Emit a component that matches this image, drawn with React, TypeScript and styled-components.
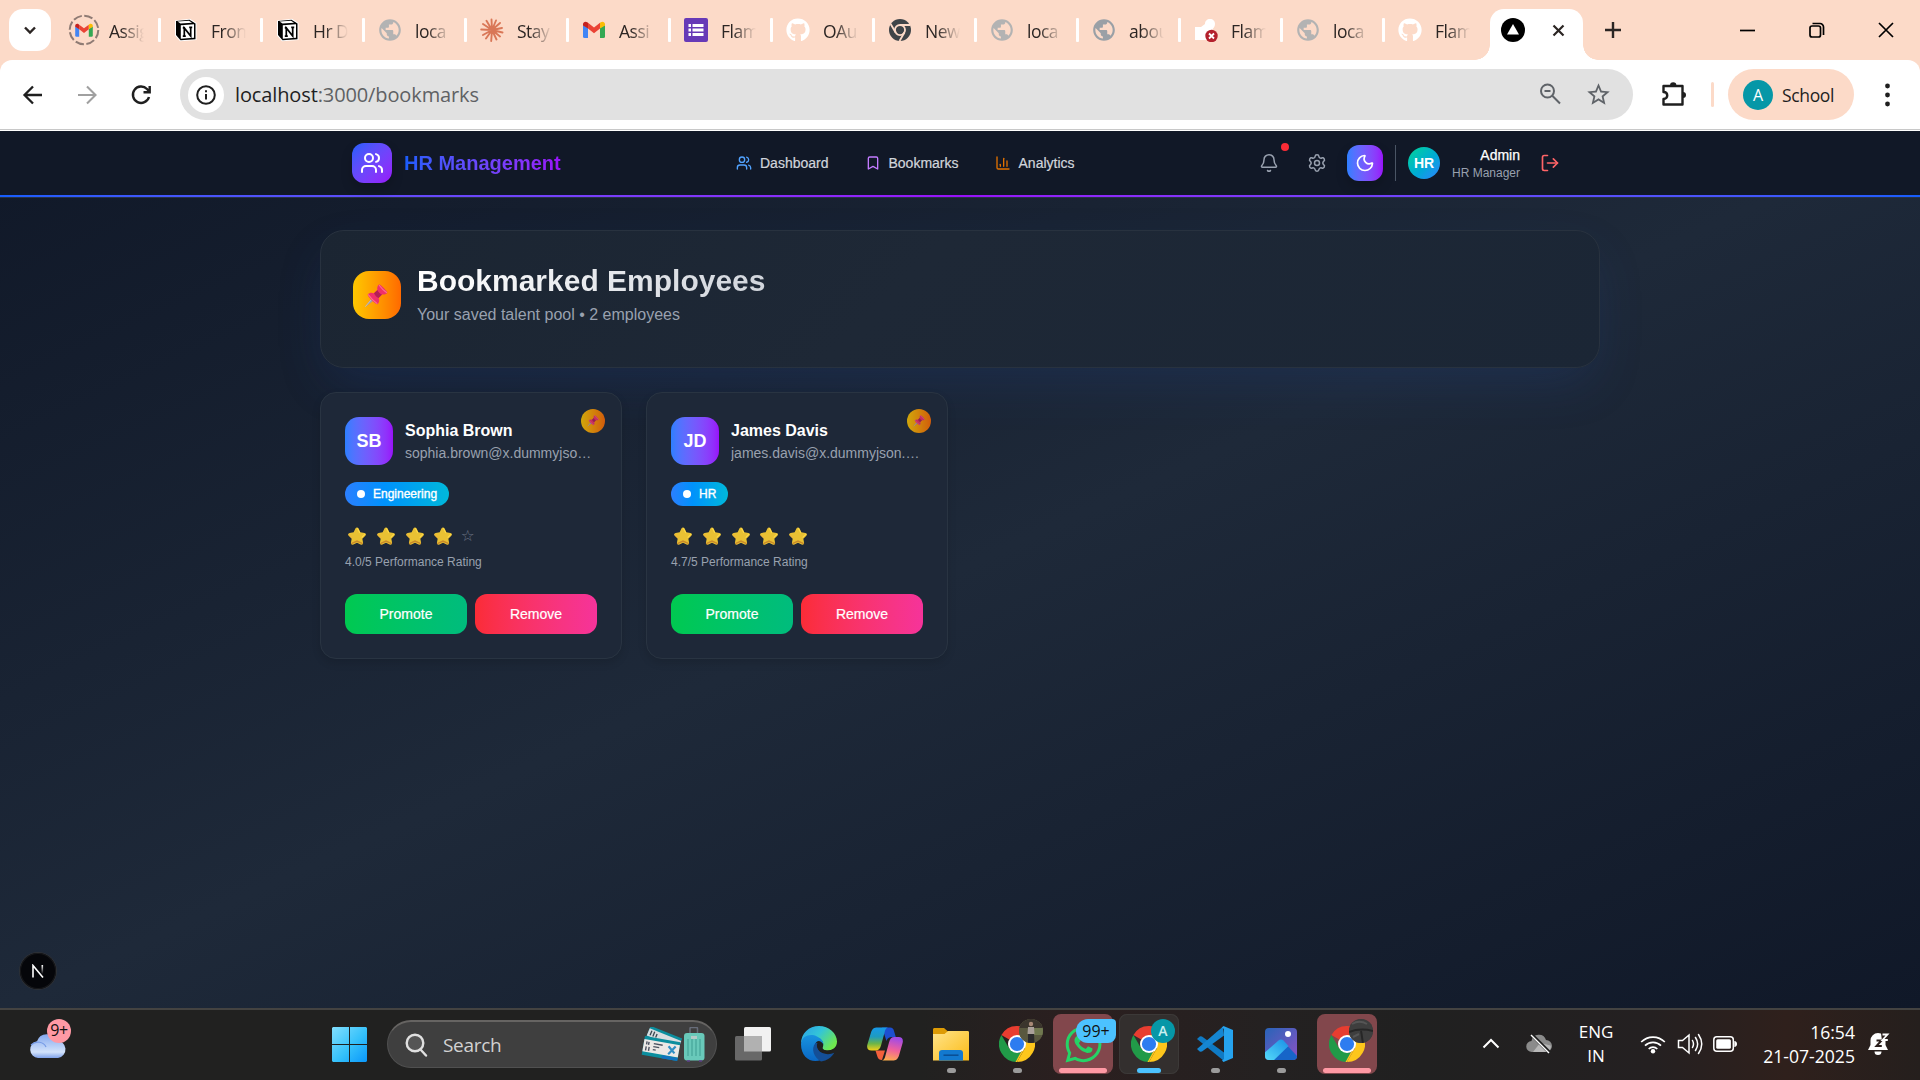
import React from "react";
import styled, { createGlobalStyle, css } from "styled-components";
import { Users, Bookmark, ChartColumn, Bell, Settings, Moon, LogOut } from "lucide-react";
import { FaGithub, FaWhatsapp } from "react-icons/fa";
import { MdPublic, MdStarOutline } from "react-icons/md";

const uiFont = '"Open Sans", "Noto Sans", sans-serif';
const pageFont = '"Liberation Sans", Arial, sans-serif';

const GlobalStyle = createGlobalStyle`
  *, *::before, *::after { box-sizing: border-box; }
  body { margin: 0; overflow: hidden; background: #101828; }
  svg { display: block; flex: none; }
  button { border: 0; padding: 0; margin: 0; font: inherit; color: inherit; background: none; }
  h1, h3, p { margin: 0; font-weight: inherit; font-size: inherit; }
`;

const Screen = styled.div`
  width: 1920px;
  height: 1080px;
  display: flex;
  flex-direction: column;
  overflow: hidden;
`;

/* ---------- Browser chrome ---------- */

const TabStrip = styled.div`
  height: 60px;
  flex: none;
  display: flex;
  align-items: center;
  background: #fcdac8;
  font: 17.5px ${uiFont};
  color: #2b2523;
`;

const TabSearch = styled.button`
  width: 42px;
  height: 42px;
  margin: 0 8px 0 9px;
  border-radius: 14px;
  background: #fff;
  display: grid;
  place-items: center;
`;

const Tab = styled.div`
  width: 102px;
  height: 24px;
  padding-left: 13px;
  display: flex;
  align-items: center;
  flex: none;
`;

const Favicon = styled.span`
  width: 24px;
  height: 24px;
  display: flex;
  align-items: center;
  justify-content: center;
  flex: none;
`;

const TabTitle = styled.span`
  width: 46px;
  margin-left: 13px;
  padding-top: 2px;
  line-height: 28px;
  letter-spacing: -0.5px;
  white-space: nowrap;
  mask-image: linear-gradient(90deg, #000 12px, transparent 35px);
`;

const TabDivider = styled.span`
  width: 3px;
  height: 24px;
  margin-left: auto;
  border-radius: 1px;
  background: #fff;
`;

const ActiveTab = styled.div`
  position: relative;
  width: 93px;
  height: 51px;
  margin: 9px 0 0 3px;
  padding: 0 18px 9px 11px;
  border-radius: 14px 14px 0 0;
  background: #fff;
  display: flex;
  align-items: center;
  justify-content: space-between;
  &::before, &::after {
    content: "";
    position: absolute;
    bottom: 0;
    width: 15px;
    height: 15px;
  }
  &::before { left: -15px; background: radial-gradient(circle at 0 0, transparent 14.5px, #fff 15px); }
  &::after { right: -15px; background: radial-gradient(circle at 100% 0, transparent 14.5px, #fff 15px); }
`;

const NewTab = styled.button`
  margin-left: 21px;
`;

const WindowControls = styled.div`
  margin-left: auto;
  display: flex;
  align-items: center;
  height: 60px;
`;

const WindowButton = styled.button`
  width: 69px;
  display: grid;
  place-items: center;
`;

const ToolbarBack = styled.div`
  flex: none;
  background: #fcdac8;
`;

const Toolbar = styled.div`
  height: 71px;
  padding: 9px 0 0 21px;
  display: flex;
  align-items: flex-start;
  background: #fff;
  border-radius: 12px 12px 0 0;
  box-shadow: inset 0 -1px #fff, inset 0 -2px #c8c8c8;
  color: #1f1f1f;
  font: 17px ${uiFont};
`;

const NavButton = styled.button`
  width: 24px;
  height: 51px;
  margin-right: 30px;
  display: grid;
  place-items: center;
`;

const AddressBar = styled.div`
  width: 1453px;
  height: 51px;
  margin-left: -3px;
  padding: 0 21px 0 8px;
  border-radius: 26px;
  background: #e1e1e1;
  display: flex;
  align-items: center;
`;

const SiteInfo = styled.span`
  width: 36px;
  height: 36px;
  border-radius: 50%;
  background: #fff;
  display: grid;
  place-items: center;
`;

const Url = styled.span`
  flex: 1;
  margin-left: 11px;
  font-size: 20px;
  letter-spacing: -0.12px;
  color: #5f6164;
  b { font-weight: 400; color: #1f1f1f; }
`;

const AddressActions = styled.span`
  display: flex;
  gap: 22px;
`;

const ToolbarEnd = styled.div`
  height: 51px;
  flex: 1;
  display: flex;
  align-items: center;
`;

const Extensions = styled.span`
  margin-left: 27px;
`;

const ToolbarDivider = styled.span`
  width: 3px;
  height: 25px;
  margin: 0 14px 0 23px;
  border-radius: 2px;
  background: #fcdac8;
`;

const ProfileChip = styled.div`
  width: 126px;
  height: 51px;
  padding-left: 15px;
  border-radius: 26px;
  background: #fcdac8;
  display: flex;
  align-items: center;
  gap: 9px;
  font-size: 17.5px;
  letter-spacing: -0.35px;
`;

const ProfileLetter = styled.span`
  width: 30px;
  height: 30px;
  border-radius: 50%;
  background: #0697a7;
  color: #fff;
  font-size: 16px;
  line-height: 30px;
  text-align: center;
`;

const MenuDots = styled.span`
  margin-left: 31px;
`;

/* ---------- Page ---------- */

const Page = styled.div`
  position: relative;
  height: 877px;
  flex: none;
  font-family: ${pageFont};
  background: linear-gradient(to bottom right in oklab, #101828, #1e2939 50%, #101828);
`;

const Header = styled.header`
  height: 67px;
  background: #111827;
  border-bottom: 1px solid #273244;
`;

const HeaderInner = styled.div`
  width: 1280px;
  height: 64px;
  margin: 0 auto;
  padding: 0 32px;
  display: flex;
  align-items: center;
  justify-content: space-between;
`;

const HeaderLine = styled.div`
  height: 2px;
  background: linear-gradient(to right in oklab, #155dfc, #9810fa, #155dfc);
`;

const Brand = styled.div`
  width: 384px;
  display: flex;
  align-items: center;
  gap: 12px;
`;

const BrandMark = styled.span`
  width: 40px;
  height: 40px;
  border-radius: 12px;
  background: linear-gradient(to bottom right in oklab, #155dfc, #9810fa);
  box-shadow: 0 6px 12px rgba(0, 0, 0, 0.18);
  color: #fff;
  display: grid;
  place-items: center;
`;

const BrandName = styled.span`
  font-size: 20px;
  line-height: 28px;
  font-weight: 700;
  color: transparent;
  background: linear-gradient(to right in oklab, #155dfc, #9810fa);
  background-clip: text;
`;

const Nav = styled.nav`
  flex: 1;
  display: flex;
  gap: 36px;
`;

const NavItem = styled.a<{ $accent: string }>`
  display: flex;
  align-items: center;
  gap: 8px;
  font-size: 14px;
  line-height: 20px;
  color: #d1d5dc;
  -webkit-text-stroke: 0.2px #d1d5dc;
  svg { color: ${(p) => p.$accent}; }
`;

const HeaderTools = styled.div`
  display: flex;
  align-items: center;
  color: #99a1af;
`;

const IconButton = styled.button<{ $tone?: string; $last?: boolean }>`
  position: relative;
  width: 36px;
  height: 36px;
  display: grid;
  place-items: center;
  margin-right: ${(p) => (p.$last ? 0 : 12)}px;
  color: ${(p) => p.$tone ?? "#99a1af"};
`;

const AlertDot = styled.span`
  position: absolute;
  top: -2px;
  right: -2px;
  width: 8px;
  height: 8px;
  border-radius: 50%;
  background: #fb2c36;
`;

const ThemeButton = styled(IconButton)`
  border-radius: 12px;
  background: linear-gradient(to right in oklab, #2b7fff, #9810fa);
  box-shadow: 0 6px 12px rgba(0, 0, 0, 0.18);
`;

const Account = styled.div`
  height: 36px;
  padding-left: 12px;
  border-left: 1px solid #4a5565;
  display: flex;
  align-items: center;
`;

const AccountAvatar = styled.span`
  width: 32px;
  height: 32px;
  flex: none;
  border-radius: 50%;
  background: linear-gradient(to bottom right in oklab, #00d492, #2b7fff);
  color: #fff;
  font-size: 14px;
  font-weight: 700;
  line-height: 32px;
  text-align: center;
`;

const AccountText = styled.div`
  width: 80px;
  padding-left: 8px;
  margin-right: 12px;
  text-align: right;
  white-space: nowrap;
  font-size: 12px;
  line-height: 16px;
  strong {
    display: block;
    font-weight: 400;
    font-size: 14px;
    line-height: 20px;
    color: #fff;
    -webkit-text-stroke: 0.25px #fff;
  }
`;

const Main = styled.main`
  width: 1280px;
  margin: 0 auto;
  padding-top: 32px;
`;

const glass = css`
  background: linear-gradient(135deg, #1b2532, #1e2836 45%, #1b2635);
  border: 1px solid #28323f;
`;

const Hero = styled.section`
  ${glass}
  height: 138px;
  padding: 32px;
  margin-bottom: 24px;
  border-radius: 24px;
  box-shadow: 0 20px 50px -8px rgba(32, 72, 150, 0.24);
  display: flex;
  align-items: flex-start;
  gap: 16px;
`;

const HeroIcon = styled.span`
  width: 48px;
  height: 48px;
  margin-top: 8px;
  padding: 1px 2px 0 0;
  border-radius: 16px;
  background: linear-gradient(to right in oklab, #fdc700, #ff6900);
  display: grid;
  place-items: center;
`;

const HeroTitle = styled.h1`
  width: max-content;
  margin-bottom: 4px;
  font-size: 30px;
  line-height: 36px;
  font-weight: 700;
  color: transparent;
  background: linear-gradient(to right in oklab, #fff, #d1d5dc);
  background-clip: text;
`;

const HeroSubtitle = styled.p`
  font-size: 16px;
  line-height: 24px;
  color: #99a1af;
`;

const CardGrid = styled.div`
  display: grid;
  grid-template-columns: repeat(4, minmax(0, 1fr));
  gap: 24px;
`;

const Card = styled.article`
  position: relative;
  height: 267px;
  padding: 24px;
  border-radius: 16px;
  background: #1e2838;
  border: 1px solid #293442;
  box-shadow: 0 4px 8px rgba(0, 0, 0, 0.12);
  display: flex;
  flex-direction: column;
`;

const PinBadge = styled.span`
  position: absolute;
  top: 16px;
  right: 16px;
  width: 24px;
  height: 24px;
  padding-right: 1px;
  border-radius: 50%;
  background: linear-gradient(to right in oklab, #fdc700, #ff6900);
  opacity: 0.8;
  display: grid;
  place-items: center;
`;

const Person = styled.div`
  display: flex;
  align-items: center;
  gap: 12px;
`;

const PersonAvatar = styled.span`
  width: 48px;
  height: 48px;
  flex: none;
  border-radius: 14px;
  background: linear-gradient(to right in oklab, #2b7fff, #9810fa);
  color: #fff;
  font-size: 18px;
  font-weight: 700;
  line-height: 48px;
  text-align: center;
`;

const PersonText = styled.div`
  min-width: 0;
  flex: 1;
`;

const PersonName = styled.h3`
  font-size: 16px;
  line-height: 24px;
  font-weight: 700;
  color: #fff;
`;

const PersonEmail = styled.p`
  font-size: 14px;
  line-height: 20px;
  color: #99a1af;
  white-space: nowrap;
  overflow: hidden;
  text-overflow: ellipsis;
`;

const Department = styled.span`
  align-self: flex-start;
  height: 24px;
  margin-top: 17px;
  padding: 0 12px;
  border-radius: 12px;
  background: linear-gradient(to right, #2b7fff, #0092fb 38%, #00b8db);
  color: #fff;
  font-size: 12px;
  line-height: 24px;
  -webkit-text-stroke: 0.35px #fff;
  display: flex;
  align-items: center;
  gap: 8px;
  &::before {
    content: "";
    width: 8px;
    height: 8px;
    border-radius: 50%;
    background: #fff;
  }
`;

const Stars = styled.div`
  height: 28px;
  margin-top: 16px;
  padding-left: 2.4px;
  display: flex;
  align-items: center;
  gap: 8.7px;
`;

const EmptyStar = styled.span`
  margin-left: -1.5px;
  font: 15.5px "DejaVu Sans", sans-serif;
  color: #6a7282;
`;

const RatingText = styled.p`
  margin-top: 4px;
  font-size: 12px;
  line-height: 16px;
  color: #99a1af;
`;

const CardActions = styled.div`
  margin-top: auto;
  display: grid;
  grid-template-columns: 1fr 1fr;
  gap: 8px;
`;

const ActionButton = styled.button<{ $from: string; $to: string }>`
  height: 40px;
  border-radius: 12px;
  background: linear-gradient(to right in oklab, ${(p) => p.$from}, ${(p) => p.$to});
  color: #fff;
  font-size: 14px;
  -webkit-text-stroke: 0.2px #fff;
`;

const DevBadge = styled.div`
  position: absolute;
  left: 20px;
  bottom: 19px;
  width: 36px;
  height: 36px;
  border-radius: 50%;
  background: #05060a;
  box-shadow: 0 0 0 1px #2d3035, inset 0 0 0 1px #17181b;
  display: grid;
  place-items: center;
`;

/* ---------- Taskbar ---------- */

const Taskbar = styled.footer`
  height: 72px;
  flex: none;
  padding-bottom: 2px;
  display: flex;
  align-items: center;
  border-top: 2px solid #444341;
  background: linear-gradient(90deg, #212120 0, #212120 48%, #2b1f1f 56%, #242121 66%, #202020 74%, #242021 86%, #2f201c 93%, #251f1d 100%);
  color: #fff;
  font: 17px ${uiFont};
`;

const Weather = styled.div`
  position: relative;
  width: 42px;
  height: 50px;
  margin-left: 29px;
  padding-top: 14px;
`;

const WeatherCount = styled.span`
  position: absolute;
  left: 18px;
  top: 0;
  width: 24px;
  height: 24px;
  border-radius: 50%;
  background: #ff99a4;
  color: #111;
  font-size: 16px;
  line-height: 23px;
  text-align: center;
  letter-spacing: -0.5px;
`;

const StartButton = styled.span`
  margin-left: 261px;
`;

const SearchBox = styled.div`
  width: 330px;
  height: 48px;
  margin: 0 6px 0 20px;
  padding: 0 11px 0 16px;
  border-radius: 24px;
  background: #3f3f3f;
  border: 1px solid #505050;
  border-top: 2px solid #666462;
  display: flex;
  align-items: center;
  justify-content: space-between;
  color: #d2d2d2;
  font-size: 19px;
  letter-spacing: -0.3px;
`;

const SearchLabel = styled.span`
  display: flex;
  align-items: center;
  gap: 15px;
`;

const Apps = styled.div`
  display: flex;
  gap: 6px;
`;

const AppTile = styled.div<{ $tile?: "alert" | "active" }>`
  position: relative;
  width: 60px;
  height: 60px;
  border-radius: 8px;
  display: grid;
  place-items: center;
  background: ${(p) => (p.$tile === "alert" ? "#82474c" : p.$tile === "active" ? "#332f2e" : "none")};
  box-shadow: ${(p) => (p.$tile === "active" ? "inset 0 0 0 1px #3c3938" : "none")};
`;

const Indicator = styled.span<{ $w: number; $color: string }>`
  position: absolute;
  bottom: 1px;
  left: calc(50% - ${(p) => p.$w / 2}px);
  width: ${(p) => p.$w}px;
  height: 5px;
  border-radius: 3px;
  background: ${(p) => p.$color};
`;

const AppBadge = styled.span<{ $bg: string }>`
  position: absolute;
  top: 5px;
  right: 4px;
  width: 24px;
  height: 24px;
  border-radius: 50%;
  overflow: hidden;
  background: ${(p) => p.$bg};
  color: #c9f0f0;
  font-size: 14px;
  font-weight: 600;
  line-height: 24px;
  text-align: center;
`;

const CountBadge = styled.span`
  position: absolute;
  top: 5px;
  left: 23px;
  width: 40px;
  height: 24px;
  border-radius: 12px 4px 8px 12px;
  background: #4cc2ff;
  color: #111;
  font-size: 16px;
  line-height: 24px;
  text-align: center;
`;

const Tray = styled.div`
  margin: 0 27px 0 auto;
  display: flex;
  align-items: center;
  line-height: 24px;
`;

const TrayCell = styled.div<{ $w: number }>`
  width: ${(p) => p.$w}px;
  display: grid;
  place-items: center;
  text-align: center;
`;

const Clock = styled.div`
  width: 106px;
  margin-right: 12px;
  text-align: right;
  font-size: 17.6px;
`;

/* ---------- Drawings ---------- */

const GmailShape = () => (
  <>
    <path d="M1 7v11.500A1.500 1.500 0 0 0 2.500 20H6V10z" fill="#4285f4" />
    <path d="M18 10v10h3.500a1.500 1.500 0 0 0 1.500-1.500V7z" fill="#34a853" />
    <path d="M6 10.500V4.800l6 4.600 6-4.600v5.700L12 15.200z" fill="#ea4335" />
    <path d="M1 6.200C1 3.800 3.600 3 5.200 4.200L6 4.800v5.800L1 7.500z" fill="#c5221f" />
    <path d="M23 6.200C23 3.800 20.400 3 18.800 4.200L18 4.800v5.800l5-3.100z" fill="#fbbc04" />
  </>
);

const Gmail = () => (
  <svg width="24" height="24" viewBox="0 0 24 24">
    <GmailShape />
  </svg>
);

const GmailLoading = () => (
  <svg width="32" height="32" viewBox="0 0 32 32">
    <circle cx="16" cy="16" r="14.300" fill="none" stroke="#8f7b74" strokeWidth="2" strokeDasharray="8.700 2.500" />
    <g transform="translate(6.400 6.800) scale(.8)">
      <GmailShape />
    </g>
  </svg>
);

const Notion = () => (
  <svg width="24" height="24" viewBox="0 0 24 24">
    <path d="M1 2.500 16 .8 22.500 5v17L6 23.200 1 17.500z" fill="#fff" />
    <path d="M2 3 15.500 1.800 21.500 5.500v15.800L6.500 22.300 2 17z" fill="#000" />
    <path d="M6.800 7.200 20 6.300v13.500l-13.200.9z" fill="#fff" />
    <path d="M3.500 3.600 15 2.700l3 2-11.500.8z" fill="#fff" />
    <path d="M10.300 18V10l6.400 8V9.300M8.800 9.800h2.300M15.200 9.300h3M8.800 18.200h3" fill="none" stroke="#000" strokeWidth="1.700" />
  </svg>
);

const Claude = () => (
  <svg width="24" height="24" viewBox="0 0 24 24" stroke="#d97757" strokeWidth="1.900" strokeLinecap="round">
    <path d="M12 12 11.500 1.500M12 12l4-9.500M12 12l8-7M12 12l10-2M12 12l10.500 2.500M12 12l8 6.500M12 12l4.500 9.500M12 12l-.8 11M12 12l-6 8.500M12 12l-9 5M12 12 1.200 11.500M12 12 3 6M12 12 6.500 2.800" />
  </svg>
);

const Forms = () => (
  <svg width="24" height="24" viewBox="0 0 24 24">
    <rect width="24" height="24" rx="2" fill="#673ab7" />
    <path d="M4.500 6h2.500v3h-2.500zM8.500 6h11v3h-11zM4.500 10.500h2.500v3h-2.500zM8.500 10.500h11v3h-11zM4.500 15h2.500v3h-2.500zM8.500 15h11v3h-11z" fill="#fff" />
  </svg>
);

const ChromeMono = () => (
  <svg width="22" height="22" viewBox="0 0 24 24">
    <circle cx="12" cy="12" r="12" fill="#3f4448" />
    <g stroke="#fcdac8" strokeWidth="2" fill="none">
      <circle cx="12" cy="12" r="5.500" />
      <path d="M12 6.500h11M16.800 14.800 11.500 24M7.200 14.800 1.800 5.500" />
    </g>
    <circle cx="12" cy="12" r="3.200" fill="#3f4448" />
  </svg>
);

const ErrorSite = () => (
  <svg width="24" height="24" viewBox="0 0 24 24">
    <path d="M1 9h6l4-3c0-3 2-5 5-5s5 2 5 5-2 4-3 6l-3 10H1z" fill="#fff" />
    <circle cx="17.500" cy="18" r="6.200" fill="#b3202c" />
    <path d="m15 15.500 5 5m0-5-5 5" stroke="#fff" strokeWidth="1.800" />
  </svg>
);

const Pushpin = ({ size }: { size: number }) => (
  <svg width={size} height={size} viewBox="0 0 24 24">
    <path d="M.8 23.200 8.600 13l2.400 2.400z" fill="#9b9aa8" />
    <path d="M1.300 22.700 9 13.700" stroke="#c9c8d4" strokeWidth=".7" />
    <path d="M3.800 10.600c1.300-1.900 4-2.300 6.200-1.300l3.400-3.400c-.5-2 .1-4.300 1.600-5.400 1.200-.7 8.900 7 8.300 8.300-1 1.600-3.300 2.100-5.300 1.600l-3.400 3.500c1 2.200.7 5-1.200 6.300-1.400.8-10.400-8.200-9.600-9.600z" fill="#f0306a" />
    <path d="M10 9.300 13.400 5.900c1 2.300 2.500 3.800 4.600 4.500l-3.400 3.500c-2-.7-3.600-2.300-4.600-4.600z" fill="#b51f55" />
    <path d="M15.400 1.500c2 2.700 4.200 5 7.100 7M4.400 10.800c2.500 3.500 5.100 6.100 8.500 8.600" stroke="#ff6f92" strokeWidth="1.100" fill="none" strokeLinecap="round" />
  </svg>
);

const StarIcon = () => (
  <svg width="20" height="20" viewBox="0 0 24 24">
    <path
      d="M12 1.800c.8 0 1.500.5 1.900 1.300l2.100 4.500 4.900.7c1.800.3 2.400 2.200 1.100 3.500l-3.600 3.500.9 4.900c.3 1.800-1.500 2.900-3 2.100L12 20.200l-4.300 2.100c-1.500.8-3.300-.3-3-2.100l.9-4.900L2 11.800C.7 10.500 1.300 8.600 3.100 8.300l4.900-.7 2.100-4.500c.4-.8 1.100-1.300 1.900-1.300z"
      fill="#e9c133"
    />
    <path d="M5.800 20.800 12 18l6.200 2.800" stroke="#c98a2a" strokeWidth="1.800" fill="none" strokeLinecap="round" />
    <path d="M21.600 9.700 18 13.500M12.600 3l2.500 4.900" stroke="#ffda47" strokeWidth="1.300" fill="none" strokeLinecap="round" />
    <path d="M2.500 10.200 6 14" stroke="#f3b13c" strokeWidth="1.200" fill="none" strokeLinecap="round" />
  </svg>
);

const WeatherCloud = () => (
  <svg width="38" height="25" viewBox="0 0 38 25">
    <defs>
      <linearGradient id="cloud" x1="0" y1="0" x2="0" y2="1">
        <stop offset="0" stopColor="#83a8ee" />
        <stop offset=".75" stopColor="#d3e3fb" />
        <stop offset="1" stopColor="#7fa2ea" />
      </linearGradient>
    </defs>
    <path d="M9 25a8.500 8.500 0 0 1-1-16.800A10.500 10.500 0 0 1 27.500 7.500 8.800 8.800 0 0 1 29 25z" fill="url(#cloud)" />
    <path d="M2 12c5-5 13-3 15 2" fill="none" stroke="#769be6" strokeWidth="1.200" />
  </svg>
);

const WindowsLogo = () => (
  <svg width="35" height="35" viewBox="0 0 35 35">
    <defs>
      <linearGradient id="win" gradientUnits="userSpaceOnUse" x1="0" y1="0" x2="35" y2="35">
        <stop offset="0" stopColor="#82dffe" />
        <stop offset=".55" stopColor="#35c1fb" />
        <stop offset="1" stopColor="#0a97fa" />
      </linearGradient>
    </defs>
    <path d="M1 0h16v17H0V1zM18 0h16l1 1v16H18zM0 18h17v17H1l-1-1zM18 18h17v16l-1 1H18z" fill="url(#win)" />
  </svg>
);

const TravelArt = () => (
  <svg width="64" height="36" viewBox="0 0 64 36">
    <g transform="rotate(22 20 16)">
      <rect x="4" y="4" width="34" height="14" fill="#0c8e9e" />
      <rect x="4" y="6.500" width="34" height="8" fill="#d9dde0" />
      <path d="M7 8v5M10 8v5M13 9v4" stroke="#39454f" strokeWidth="1.300" />
    </g>
    <g transform="rotate(10 20 22)">
      <rect x="2" y="12" width="36" height="19" fill="#0c8e9e" />
      <rect x="2" y="15" width="36" height="12.500" fill="#ece9e6" />
      <path d="M5 17v3M7 17v3M5 22v4M8 22v4M12 18h9M12 21h6M12 24h3" stroke="#4a5260" strokeWidth="1.400" />
      <path d="m27 18 7 6m0-7-6 9" stroke="#2f8fc4" strokeWidth="2.200" />
      <path d="M38 28H22v3h16z" fill="#1173c0" />
    </g>
    <path d="M49 7V1.500c0-.6.300-1 1-1h5.500c.7 0 1 .4 1 1V7" fill="none" stroke="#686d7a" strokeWidth="1.500" />
    <rect x="43" y="6" width="20.500" height="27.500" rx="3" fill="#69c9ba" />
    <path d="M47 12v17M51 12v17M55 12v17M59 12v17" stroke="#3f9d92" strokeWidth="1" />
    <path d="M50 9h6v3h-6z" fill="#b4cbc8" />
    <path d="M46 34h3M58 34h3" stroke="#5e3f8a" strokeWidth="1.500" />
  </svg>
);

const TaskView = () => (
  <svg width="36" height="36" viewBox="0 0 36 36">
    <rect x="9" y="1" width="27" height="24.500" rx="1.500" fill="#f1f1f1" />
    <rect x="0" y="10" width="27" height="24.500" rx="1.500" fill="#686868" />
    <rect x="9" y="10" width="18" height="15.500" fill="#b1b1b1" />
  </svg>
);

const Edge = () => (
  <svg width="36" height="36" viewBox="0 0 36 36">
    <defs>
      <linearGradient id="edgeTop" x1="0" y1="0" x2="1" y2=".6">
        <stop offset="0" stopColor="#2a9fe8" />
        <stop offset=".5" stopColor="#33c5d8" />
        <stop offset="1" stopColor="#6fe84e" />
      </linearGradient>
      <linearGradient id="edgeLow" x1="0" y1="0" x2="0" y2="1">
        <stop offset="0" stopColor="#1893df" />
        <stop offset="1" stopColor="#0a67c4" />
      </linearGradient>
    </defs>
    <path d="M0 18C0 7 8 0 18 0s18 7.500 18 15.500C36 21 32 24.500 27 24.500c-4 0-6-1.500-5.500-3C23.500 19 22 13 16 12 9 9 2 12 0 18z" fill="url(#edgeTop)" />
    <path d="M0 18C1 9 10 7.500 16 10.500c5.500 2.500 6.500 6 6.300 8C21 15.500 17.500 14 15.500 16c-4 4-1 14 5 17.700C11 38 0 32 0 18z" fill="url(#edgeLow)" />
    <path d="M14.500 17c-5 6-1.500 14.500 5.500 18.500 6-.5 11-4.500 13.300-8.700-5 2.500-13 1.700-16-3-1.500-2.500-1.200-5-.3-6.800z" fill="#144f97" />
    <path d="M16 18c1-2 3.800-2 5.300 0 .8 1.300.4 2.500.2 3.500-.6 1.700 2 3 5.500 3 2.300 0 4.300-.7 6-1.700-1.500 4-9 5.500-13 2.800-3-2-4.600-5.300-4-7.600z" fill="#202020" />
  </svg>
);

const Copilot = () => (
  <svg width="36" height="36" viewBox="0 0 36 36">
    <defs>
      <linearGradient id="cpA" x1="0" y1="0" x2="0" y2="1">
        <stop offset="0" stopColor="#1798e8" />
        <stop offset=".4" stopColor="#1e9bc0" />
        <stop offset=".7" stopColor="#6db548" />
        <stop offset="1" stopColor="#f5d018" />
      </linearGradient>
      <linearGradient id="cpB" x1=".4" y1="0" x2=".2" y2="1">
        <stop offset="0" stopColor="#a14be6" />
        <stop offset=".5" stopColor="#f0609c" />
        <stop offset="1" stopColor="#ffb04a" />
      </linearGradient>
    </defs>
    <path d="M15 1.500h8c2.500 0 3.500 1.500 4 3.500l1.800 6H25c-3 0-4.500 1-5.500 4z" fill="#1d4fd0" />
    <path d="M8.500 24.500H18l-3 9.500c-3 0-4-1.500-4.800-4z" fill="#f4603c" />
    <path d="M10.500 1.500H21c-2 .5-2.600 2-3.200 4L14 19.500c-1 3.500-2.500 5-5.500 5H4.500C.8 24.500-.5 22 .4 18.500L4 6.500C5.200 2.800 7 1.500 10.500 1.500z" fill="url(#cpA)" />
    <path d="M25.500 34.500H15c2-.5 2.600-2 3.200-4L22 16.500c1-3.800 2.500-5.500 5.500-5.500h4c3.700 0 5 2.500 4.100 6L32 29.500c-1.200 3.700-3 5-6.500 5z" fill="url(#cpB)" />
  </svg>
);

const Explorer = () => (
  <svg width="36" height="36" viewBox="0 0 36 36">
    <defs>
      <linearGradient id="fold" x1="0" y1="0" x2="1" y2="1">
        <stop offset="0" stopColor="#ffe48a" />
        <stop offset="1" stopColor="#fbbb16" />
      </linearGradient>
    </defs>
    <path d="M0 3.500C0 2.500.7 2 1.500 2H11l4 3.500V9H0z" fill="#dd9b05" />
    <path d="M0 8h11.500L15 5h19.500c1 0 1.500.5 1.500 1.500v28H0z" fill="url(#fold)" />
    <path d="M6 34.500V27a3 3 0 0 1 3-3h18a3 3 0 0 1 3 3v7.500z" fill="#1279cf" />
    <path d="M10.500 29.200h15" stroke="#0a4d92" strokeWidth="1.500" />
  </svg>
);

const Chrome = () => (
  <svg width="36" height="36" viewBox="0 0 36 36">
    <path d="M18 18 2.410 9A18 18 0 0 1 33.590 9H18z" fill="#e83d30" />
    <path d="M18 9h15.590A18 18 0 0 1 18 36l7.800-13.500z" fill="#fdc61c" />
    <path d="M2.410 9 10.200 22.500 18 27l4-.9L18 36A18 18 0 0 1 2.410 9z" fill="#219a48" />
    <path d="M25.800 22.500 18 36l-1.500-.1L22 26z" fill="#fdc61c" />
    <circle cx="18" cy="18" r="9" fill="#fff" />
    <circle cx="18" cy="18" r="7.100" fill="#2d7cf0" />
  </svg>
);

const VsCode = () => (
  <svg width="36" height="36" viewBox="0 0 36 36">
    <path d="M0 13 3 10.300l2 .1L27 26.500v8.500z" fill="#0f7ac4" />
    <path d="M0 23 26 .5 27 9.500 5 25.600l-2 .1z" fill="#1586d2" />
    <path d="M26.500 0 36 4v28l-9.500 4-1.500-1.500L27 33V3l-2-1.500z" fill="#26a3ee" />
  </svg>
);

const Photos = () => (
  <svg width="32" height="32" viewBox="0 0 32 32">
    <defs>
      <linearGradient id="sky" x1="0" y1="0" x2="1" y2="1">
        <stop offset="0" stopColor="#2864b8" />
        <stop offset="1" stopColor="#8b52c4" />
      </linearGradient>
      <linearGradient id="hill" x1="0" y1="1" x2="1" y2="0">
        <stop offset="0" stopColor="#58dffb" />
        <stop offset="1" stopColor="#1a8fe6" />
      </linearGradient>
      <clipPath id="frame"><rect width="32" height="32" rx="4" /></clipPath>
    </defs>
    <g clipPath="url(#frame)">
      <rect width="32" height="32" fill="url(#sky)" />
      <path d="M8 32 20 19.500c1.200-1.200 2.800-1.200 4 0L34 30v4z" fill="#1765c8" />
      <path d="M-2 26 13.500 12.500c1.500-1.300 3.500-1.300 5 0l5 5.500L8 33H-2z" fill="url(#hill)" />
      <circle cx="23" cy="6" r="3" fill="#fff" />
    </g>
  </svg>
);

const PortraitBadge = () => (
  <svg width="24" height="24" viewBox="0 0 24 24">
    <rect width="24" height="24" fill="#59583f" />
    <path d="M0 0h24v9H0z" fill="#3b352d" />
    <path d="M15 9h9v7h-9z" fill="#70784f" />
    <circle cx="12" cy="5" r="2.200" fill="#a88976" />
    <path d="M9 8h6l.5 7h-7z" fill="#aaa09a" />
    <path d="M9 15h6l.5 9H9z" fill="#2b2a2c" />
  </svg>
);

const DarkBadge = () => (
  <svg width="24" height="24" viewBox="0 0 24 24">
    <rect width="24" height="24" fill="#3e3e3e" />
    <path d="M0 13c8-3 16-3 24-1M12 12c1 4 1 8 2 12" stroke="#262626" strokeWidth="2" fill="none" />
    <path d="M3 5c5-3 10-3 15 0M4 18l6-3" stroke="#555" strokeWidth="2" fill="none" />
  </svg>
);

const Line = ({ d, w = 24, h = w, sw = 2, color = "currentColor" }: { d: string; w?: number; h?: number; sw?: number; color?: string }) => (
  <svg width={w} height={h} viewBox={`0 0 ${w} ${h}`} fill="none" stroke={color} strokeWidth={sw}>
    <path d={d} />
  </svg>
);

/* ---------- Data ---------- */

const globe = (color: string) => <MdPublic size={26} color={color} />;

const tabs: { title: string; icon: React.ReactNode }[] = [
  { title: "Assig", icon: <GmailLoading /> },
  { title: "Fron", icon: <Notion /> },
  { title: "Hr D", icon: <Notion /> },
  { title: "loca", icon: globe("#b3b3b3") },
  { title: "Stay", icon: <Claude /> },
  { title: "Assi", icon: <Gmail /> },
  { title: "Flam", icon: <Forms /> },
  { title: "OAu", icon: <FaGithub size={24} color="#fff" /> },
  { title: "New", icon: <ChromeMono /> },
  { title: "loca", icon: globe("#b3b3b3") },
  { title: "abou", icon: globe("#9aa0a6") },
  { title: "Flam", icon: <ErrorSite /> },
  { title: "loca", icon: globe("#b3b3b3") },
  { title: "Flam", icon: <FaGithub size={24} color="#fff" /> },
];

const employees = [
  { initials: "SB", name: "Sophia Brown", email: "sophia.brown@x.dummyjson.com", dept: "Engineering", stars: 4, rating: "4.0" },
  { initials: "JD", name: "James Davis", email: "james.davis@x.dummyjson.com", dept: "HR", stars: 5, rating: "4.7" },
];

/* ---------- Sections ---------- */

const Browser = () => (
  <>
    <TabStrip>
      <TabSearch>
        <Line d="M3 5.500l5 5 5-5" w={16} sw={2.400} />
      </TabSearch>
      {tabs.map((tab, i) => (
        <Tab key={i}>
          <Favicon>{tab.icon}</Favicon>
          <TabTitle>{tab.title}</TabTitle>
          {i < tabs.length - 1 && <TabDivider />}
        </Tab>
      ))}
      <ActiveTab>
        <svg width="24" height="24" viewBox="0 0 24 24">
          <circle cx="12" cy="12" r="12" fill="#000" />
          <path d="M12 6l6 10.500H6z" fill="#fff" />
        </svg>
        <Line d="M1.500 1.500l10 10M11.500 1.500l-10 10" w={13} sw={2.200} />
      </ActiveTab>
      <NewTab>
        <Line d="M9 1v16M1 9h16" w={18} sw={2.400} />
      </NewTab>
      <WindowControls>
        <WindowButton><Line d="M0 7.500h15" w={15} sw={1.700} color="#000" /></WindowButton>
        <WindowButton>
          <Line d="M3 4h6.500a2 2 0 0 1 2 2v7a2 2 0 0 1-2 2H3a2 2 0 0 1-2-2V6a2 2 0 0 1 2-2zM3.500 1.500h7.500a3.500 3.500 0 0 1 3.500 3.500v8" w={16} sw={1.700} color="#000" />
        </WindowButton>
        <WindowButton><Line d="M1 1l14 14M15 1L1 15" w={16} sw={1.700} color="#000" /></WindowButton>
      </WindowControls>
    </TabStrip>
    <ToolbarBack>
      <Toolbar>
        <NavButton><Line d="M21 12H4M12 3.500L3.500 12l8.500 8.500" sw={2.300} /></NavButton>
        <NavButton><Line d="M3 12h17M12 3.500l8.500 8.500-8.500 8.500" sw={2.100} color="#a0a0a0" /></NavButton>
        <NavButton><Line d="M20 14a8.200 8.200 0 1 1-2-8l2.500 2.700M20.700 3v6.200h-6.200" sw={2.400} /></NavButton>
        <AddressBar>
          <SiteInfo>
            <svg width="20" height="20" viewBox="0 0 20 20">
              <circle cx="10" cy="10" r="8.800" fill="none" stroke="#1f1f1f" strokeWidth="2" />
              <path d="M10 9v5.500M10 5.200v2" stroke="#1f1f1f" strokeWidth="2" />
            </svg>
          </SiteInfo>
          <Url><b>localhost</b>:3000/bookmarks</Url>
          <AddressActions>
            <svg width="26" height="26" viewBox="0 0 26 26" fill="none" stroke="#5f6368" strokeWidth="2">
              <circle cx="10.500" cy="10" r="6.500" />
              <path d="M15.300 14.800 23 22.500M7.500 10h6" />
            </svg>
            <MdStarOutline size={27} color="#5f6368" />
          </AddressActions>
        </AddressBar>
        <ToolbarEnd>
          <Extensions>
            <svg width="28" height="28" viewBox="0 0 28 28" fill="none" stroke="#1f1f1f" strokeWidth="2.400" strokeLinejoin="round">
              <path d="M3.500 5h19v18.500h-19v-5.500c5 0 5-7 0-7z" />
              <path d="M10 4.500a3.200 3.200 0 0 1 6.400 0zM23 11a3 3 0 0 1 0 6z" fill="#1f1f1f" stroke="none" />
            </svg>
          </Extensions>
          <ToolbarDivider />
          <ProfileChip>
            <ProfileLetter>A</ProfileLetter>
            School
          </ProfileChip>
          <MenuDots>
            <svg width="5" height="26" viewBox="0 0 5 26" fill="#1f1f1f">
              <circle cx="2.500" cy="4" r="2.400" />
              <circle cx="2.500" cy="13" r="2.400" />
              <circle cx="2.500" cy="22" r="2.400" />
            </svg>
          </MenuDots>
        </ToolbarEnd>
      </Toolbar>
    </ToolbarBack>
  </>
);

const SiteHeader = () => (
  <Header>
    <HeaderInner>
      <Brand>
        <BrandMark><Users size={24} /></BrandMark>
        <BrandName>HR Management</BrandName>
      </Brand>
      <Nav>
        <NavItem $accent="#51a2ff"><Users size={16} />Dashboard</NavItem>
        <NavItem $accent="#c27aff"><Bookmark size={16} />Bookmarks</NavItem>
        <NavItem $accent="#e17100"><ChartColumn size={16} />Analytics</NavItem>
      </Nav>
      <HeaderTools>
        <IconButton><Bell size={20} strokeWidth={1.8} /><AlertDot /></IconButton>
        <IconButton><Settings size={20} strokeWidth={1.8} /></IconButton>
        <ThemeButton $tone="#fff"><Moon size={20} /></ThemeButton>
        <Account>
          <AccountAvatar>HR</AccountAvatar>
          <AccountText>
            <strong>Admin</strong>
            HR Manager
          </AccountText>
        </Account>
        <IconButton $tone="#ff6467" $last><LogOut size={20} /></IconButton>
      </HeaderTools>
    </HeaderInner>
    <HeaderLine />
  </Header>
);

const EmployeeCard = ({ initials, name, email, dept, stars, rating }: (typeof employees)[number]) => (
  <Card>
    <PinBadge><Pushpin size={12} /></PinBadge>
    <Person>
      <PersonAvatar>{initials}</PersonAvatar>
      <PersonText>
        <PersonName>{name}</PersonName>
        <PersonEmail>{email}</PersonEmail>
      </PersonText>
    </Person>
    <Department>{dept}</Department>
    <Stars>
      {Array.from({ length: 5 }, (_, i) => (i < stars ? <StarIcon key={i} /> : <EmptyStar key={i}>☆</EmptyStar>))}
    </Stars>
    <RatingText>{rating}/5 Performance Rating</RatingText>
    <CardActions>
      <ActionButton $from="#00c950" $to="#00bc7d">Promote</ActionButton>
      <ActionButton $from="#fb2c36" $to="#f6339a">Remove</ActionButton>
    </CardActions>
  </Card>
);

const SystemTaskbar = () => (
  <Taskbar>
    <Weather>
      <WeatherCloud />
      <WeatherCount>9+</WeatherCount>
    </Weather>
    <StartButton><WindowsLogo /></StartButton>
    <SearchBox>
      <SearchLabel>
        <svg width="24" height="24" viewBox="0 0 24 24" fill="none" stroke="#e0e0e0" strokeWidth="2.400">
          <circle cx="11" cy="10" r="8.300" fill="#555" />
          <path d="M16.500 16.500 22 22.500" strokeLinecap="round" />
        </svg>
        Search
      </SearchLabel>
      <TravelArt />
    </SearchBox>
    <Apps>
      <AppTile><TaskView /></AppTile>
      <AppTile><Edge /></AppTile>
      <AppTile><Copilot /></AppTile>
      <AppTile><Explorer /><Indicator $w={9} $color="#9b9b9b" /></AppTile>
      <AppTile><Chrome /><AppBadge $bg="#59583f"><PortraitBadge /></AppBadge><Indicator $w={9} $color="#9b9b9b" /></AppTile>
      <AppTile $tile="alert"><FaWhatsapp size={41} color="#25d366" /><CountBadge>99+</CountBadge><Indicator $w={48} $color="#ff99a4" /></AppTile>
      <AppTile $tile="active"><Chrome /><AppBadge $bg="#0697a7">A</AppBadge><Indicator $w={24} $color="#4cc2ff" /></AppTile>
      <AppTile><VsCode /><Indicator $w={9} $color="#9b9b9b" /></AppTile>
      <AppTile><Photos /><Indicator $w={9} $color="#9b9b9b" /></AppTile>
      <AppTile $tile="alert"><Chrome /><AppBadge $bg="#3e3e3e"><DarkBadge /></AppBadge><Indicator $w={48} $color="#ff99a4" /></AppTile>
    </Apps>
    <Tray>
      <TrayCell $w={48}><Line d="M1.500 12.500 9 5l7.500 7.500" w={18} sw={2} /></TrayCell>
      <TrayCell $w={48}>
        <svg width="26" height="20" viewBox="0 0 26 20">
          <path d="M6 18a5.500 5.500 0 0 1-.5-11A7.500 7.500 0 0 1 20 6a6 6 0 0 1 0 12z" fill="#8b8b8b" />
          <path d="M7 18h13a5 5 0 0 0 4.500-6.500L14 9z" fill="#b8b8b8" />
          <path d="M6 1l18 18" stroke="#202020" strokeWidth="3.500" />
          <path d="M5 1l18 18" stroke="#fff" strokeWidth="1.500" />
        </svg>
      </TrayCell>
      <TrayCell $w={66}><span>ENG<br />IN</span></TrayCell>
      <TrayCell $w={48}>
        <svg width="26" height="20" viewBox="0 0 26 20" fill="none" stroke="#fff" strokeWidth="1.700">
          <path d="M1.200 8a16.500 16.500 0 0 1 23.600 0M5 11.600a11.300 11.300 0 0 1 16 0M8.700 15a6 6 0 0 1 8.600 0" />
          <circle cx="13" cy="17.300" r="2.200" fill="#fff" stroke="none" />
        </svg>
      </TrayCell>
      <TrayCell $w={24}>
        <svg width="26" height="22" viewBox="0 0 26 22" fill="none" stroke="#fff" strokeWidth="1.500" strokeLinecap="round">
          <path d="M1.500 7.500h4L12 2v18l-6.500-5.500h-4zM15.500 7.500q2 3.500 0 7M18.500 4.500q4.300 6.500 0 13M21.500 1.500q6.500 9.500 0 19" />
        </svg>
      </TrayCell>
      <TrayCell $w={48}>
        <svg width="24" height="16" viewBox="0 0 24 16">
          <rect x=".8" y=".8" width="19.500" height="14.400" rx="3" fill="none" stroke="#fff" strokeWidth="1.500" />
          <rect x="3.200" y="3.200" width="14.700" height="9.600" rx="1.500" fill="#fff" />
          <path d="M21.300 5v6q2.700-.3 2.700-3t-2.700-3z" fill="#fff" />
        </svg>
      </TrayCell>
      <Clock>16:54<br />21-07-2025</Clock>
      <svg width="26" height="24" viewBox="0 0 26 24">
        <path d="M3.500 8.500a7.500 7.500 0 0 1 15 0V13l2.500 5H1l2.500-5zM7.500 19.500h7a3.500 3.500 0 0 1-7 0z" fill="#fff" />
        <path d="M9.500 8.500h5l-5 5.500h5.300" fill="none" stroke="#2a1f1c" strokeWidth="2" />
        <path d="M14 1h7v8h-6z" fill="#2a1f1c" />
        <path d="M15.500 2.500h5l-5 5.500h5.300" fill="none" stroke="#fff" strokeWidth="1.800" />
      </svg>
    </Tray>
  </Taskbar>
);

export default function App() {
  return (
    <Screen>
      <GlobalStyle />
      <Browser />
      <Page>
        <SiteHeader />
        <Main>
          <Hero>
            <HeroIcon><Pushpin size={24} /></HeroIcon>
            <div>
              <HeroTitle>Bookmarked Employees</HeroTitle>
              <HeroSubtitle>Your saved talent pool • 2 employees</HeroSubtitle>
            </div>
          </Hero>
          <CardGrid>
            {employees.map((e) => <EmployeeCard key={e.initials} {...e} />)}
          </CardGrid>
        </Main>
        <DevBadge>
          <svg width="14" height="14" viewBox="0 0 14 14" fill="none" strokeWidth="1.600">
            <defs>
              <linearGradient id="stem" x1="0" y1="0" x2="0" y2="1">
                <stop offset="0" stopColor="#fff" />
                <stop offset="1" stopColor="#fff" stopOpacity="0" />
              </linearGradient>
            </defs>
            <path d="M2 13.500V1.500l10 12" stroke="#fff" />
            <rect x="10.500" y="1" width="1.600" height="9" fill="url(#stem)" />
          </svg>
        </DevBadge>
      </Page>
      <SystemTaskbar />
    </Screen>
  );
}
